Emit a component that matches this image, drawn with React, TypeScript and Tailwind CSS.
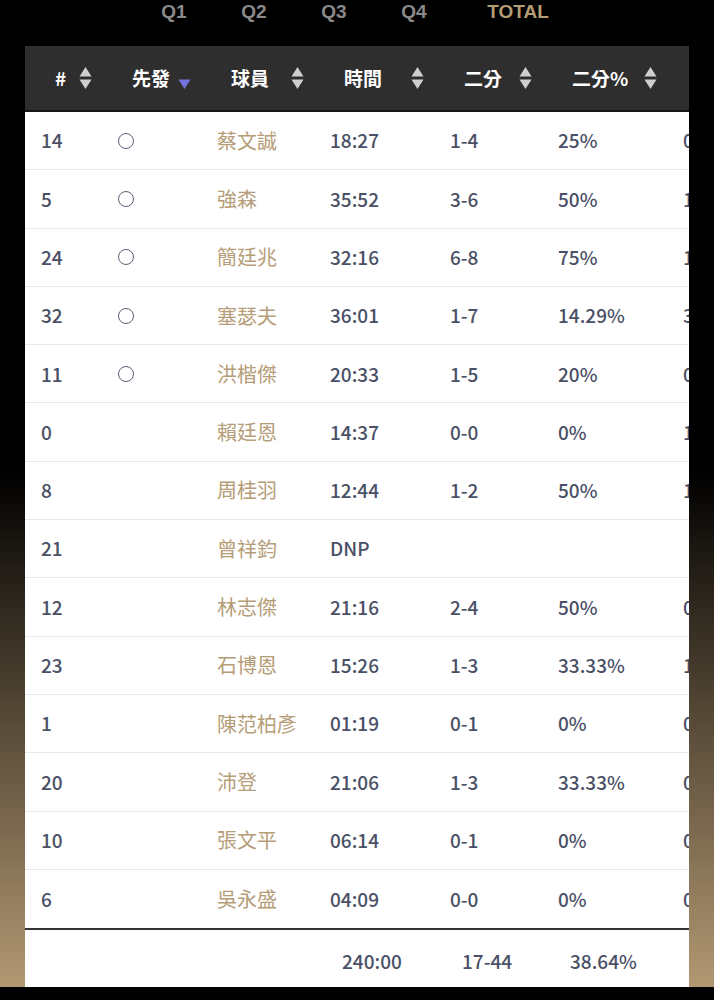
import React from "react";

type Row = {
  no: string;
  starter: boolean;
  name: string;
  min: string;
  fg2: string;
  pct2: string;
  fg3: string;
};

const rows: Row[] = [
  { no: "14", starter: true, name: "蔡文誠", min: "18:27", fg2: "1-4", pct2: "25%", fg3: "0-2" },
  { no: "5", starter: true, name: "強森", min: "35:52", fg2: "3-6", pct2: "50%", fg3: "1-3" },
  { no: "24", starter: true, name: "簡廷兆", min: "32:16", fg2: "6-8", pct2: "75%", fg3: "1-2" },
  { no: "32", starter: true, name: "塞瑟夫", min: "36:01", fg2: "1-7", pct2: "14.29%", fg3: "3-6" },
  { no: "11", starter: true, name: "洪楷傑", min: "20:33", fg2: "1-5", pct2: "20%", fg3: "0-1" },
  { no: "0", starter: false, name: "賴廷恩", min: "14:37", fg2: "0-0", pct2: "0%", fg3: "1-3" },
  { no: "8", starter: false, name: "周桂羽", min: "12:44", fg2: "1-2", pct2: "50%", fg3: "1-4" },
  { no: "21", starter: false, name: "曾祥鈞", min: "DNP", fg2: "", pct2: "", fg3: "" },
  { no: "12", starter: false, name: "林志傑", min: "21:16", fg2: "2-4", pct2: "50%", fg3: "0-3" },
  { no: "23", starter: false, name: "石博恩", min: "15:26", fg2: "1-3", pct2: "33.33%", fg3: "1-2" },
  { no: "1", starter: false, name: "陳范柏彥", min: "01:19", fg2: "0-1", pct2: "0%", fg3: "0-0" },
  { no: "20", starter: false, name: "沛登", min: "21:06", fg2: "1-3", pct2: "33.33%", fg3: "0-2" },
  { no: "10", starter: false, name: "張文平", min: "06:14", fg2: "0-1", pct2: "0%", fg3: "0-1" },
  { no: "6", starter: false, name: "吳永盛", min: "04:09", fg2: "0-0", pct2: "0%", fg3: "0-0" },
];

const widths = ["w-[77px]", "w-[99px]", "w-[113px]", "w-[120px]", "w-[108px]", "w-[125px]", "w-[80px]"];

function SortArrows() {
  return (
    <svg width="13" height="24" viewBox="0 0 13 24">
      <polygon points="0.5,10.5 6.5,1 12.5,10.5" fill="#cfcfcf" />
      <polygon points="0.5,13.5 12.5,13.5 6.5,23" fill="#cfcfcf" />
    </svg>
  );
}

function SortDown() {
  return (
    <svg width="13" height="24" viewBox="0 0 13 24">
      <polygon points="0.5,13.5 12.5,13.5 6.5,23" fill="#7273dc" />
    </svg>
  );
}

function HeadCell({ label, w, active }: { label: string; w: string; active?: boolean }) {
  return (
    <div className={`${w} shrink-0 flex items-center justify-between pl-[30px] pr-[10px]`}>
      <span className="text-[19px] font-bold text-white">{label}</span>
      {active ? <SortDown /> : <SortArrows />}
    </div>
  );
}

export default function App() {
  const tabs = ["Q1", "Q2", "Q3", "Q4"];

  return (
    <div className="w-[714px] h-[1000px] bg-black overflow-hidden">
      <div className="h-[987px] bg-[linear-gradient(to_bottom,#000_0px,#000_470px,#b29872_987px)]">
        {/* 節次 tabs */}
        <div className="h-[46px] flex pl-[134px] font-['Liberation_Sans',sans-serif] font-bold text-[19px] leading-[24px]">
          {tabs.map((t) => (
            <div key={t} className="w-[80px] text-center text-[#8a8a8a]">
              {t}
            </div>
          ))}
          <div className="w-[128px] text-center text-[#b59c73]">TOTAL</div>
        </div>

        {/* 表格 */}
        <div className="ml-[25px] w-[664px] overflow-hidden bg-white font-['Noto_Sans_CJK_TC','Noto_Sans',sans-serif]">
          <div className="flex w-[722px] h-[66px] bg-[#2e2e2e] border-b-2 border-[#161616]">
            <HeadCell label="#" w={widths[0]} />
            <HeadCell label="先發" w={widths[1]} active />
            <HeadCell label="球員" w={widths[2]} />
            <HeadCell label="時間" w={widths[3]} />
            <HeadCell label="二分" w={widths[4]} />
            <HeadCell label="二分%" w={widths[5]} />
            <HeadCell label="三分" w={widths[6]} />
          </div>

          {rows.map((r, i) => (
            <div
              key={r.no}
              className={`flex w-[722px] h-[58.3px] items-center text-[19px] font-medium text-[#4a5066] ${
                i < rows.length - 1 ? "border-b border-[#e6e8ef]" : ""
              }`}>
              <div className={`${widths[0]} shrink-0 pl-4`}>{r.no}</div>
              <div className={`${widths[1]} shrink-0 pl-4 flex items-center`}>
                {r.starter && <span className="block w-4 h-4 rounded-full border-[1.5px] border-[#5a6076]" />}
              </div>
              <div className={`${widths[2]} shrink-0 pl-4 text-[20px] font-normal text-[#b59d78]`}>{r.name}</div>
              <div className={`${widths[3]} shrink-0 pl-4`}>{r.min}</div>
              <div className={`${widths[4]} shrink-0 pl-4`}>{r.fg2}</div>
              <div className={`${widths[5]} shrink-0 pl-4`}>{r.pct2}</div>
              <div className={`${widths[6]} shrink-0 pl-4`}>{r.fg3}</div>
            </div>
          ))}

          {/* 合計 */}
          <div className="flex w-[722px] h-[59px] border-t-2 border-[#333] pt-[17px] text-[19px] font-medium text-[#4a5066]">
            <div className={`${widths[0]} shrink-0`} />
            <div className={`${widths[1]} shrink-0`} />
            <div className={`${widths[2]} shrink-0`} />
            <div className={`${widths[3]} shrink-0 pl-7`}>240:00</div>
            <div className={`${widths[4]} shrink-0 pl-7`}>17-44</div>
            <div className={`${widths[5]} shrink-0 pl-7`}>38.64%</div>
            <div className={`${widths[6]} shrink-0 pl-7`}>5-22</div>
          </div>
        </div>
      </div>
    </div>
  );
}
